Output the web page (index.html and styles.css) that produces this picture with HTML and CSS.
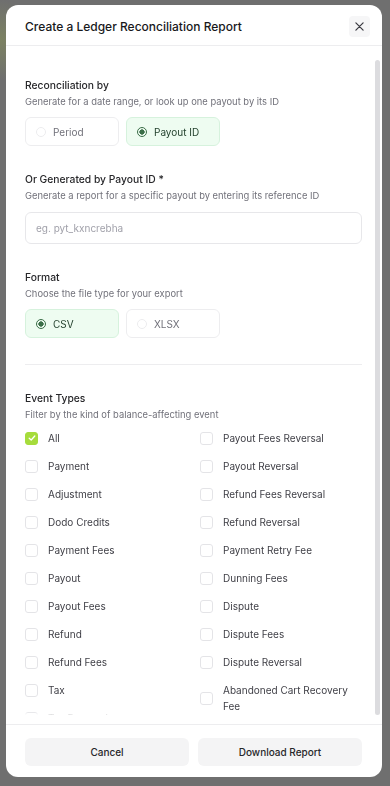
FILE: index.html
```html
<!DOCTYPE html>
<html lang="en">
<head>
    <meta charset="UTF-8">
    <meta name="viewport" content="width=device-width, initial-scale=1.0">
    <title>Ledger Reconciliation Report</title>
    <link rel="stylesheet" href="styles.css">
</head>
<body>
    <div class="backdrop">
        <div class="modal">
            <div class="modal-header">
                <h1>Create a Ledger Reconciliation Report</h1>
                <button class="close-btn" aria-label="Close">
                    <svg width="9" height="9" viewBox="0 0 10 10"><path d="M1 1L9 9M9 1L1 9" stroke="#3f3f46" stroke-width="1.4" stroke-linecap="round"/></svg>
                </button>
            </div>

            <div class="modal-body">
                <div class="section">
                    <div class="label">Reconciliation by</div>
                    <div class="hint">Generate for a date range, or look up one payout by its ID</div>
                    <div class="options">
                        <div class="option"><span class="radio"></span>Period</div>
                        <div class="option selected"><span class="radio"></span>Payout ID</div>
                    </div>
                </div>

                <div class="section">
                    <div class="label">Or Generated by Payout ID *</div>
                    <div class="hint">Generate a report for a specific payout by entering its reference ID</div>
                    <input class="text-input" type="text" placeholder="eg. pyt_kxncrebha">
                </div>

                <div class="section">
                    <div class="label">Format</div>
                    <div class="hint">Choose the file type for your export</div>
                    <div class="options">
                        <div class="option selected"><span class="radio"></span>CSV</div>
                        <div class="option"><span class="radio"></span>XLSX</div>
                    </div>
                </div>

                <div class="divider"></div>

                <div class="section">
                    <div class="label">Event Types</div>
                    <div class="hint">Filter by the kind of balance-affecting event</div>
                    <div class="events">
                        <div class="event-col">
                            <label class="check"><span class="box checked"><svg width="8" height="8" viewBox="0 0 10 10"><path d="M1.5 5.2L4 7.5L8.5 2.5" fill="none" stroke="#fff" stroke-width="1.6" stroke-linecap="round" stroke-linejoin="round"/></svg></span>All</label>
                            <label class="check"><span class="box"></span>Payment</label>
                            <label class="check"><span class="box"></span>Adjustment</label>
                            <label class="check"><span class="box"></span>Dodo Credits</label>
                            <label class="check"><span class="box"></span>Payment Fees</label>
                            <label class="check"><span class="box"></span>Payout</label>
                            <label class="check"><span class="box"></span>Payout Fees</label>
                            <label class="check"><span class="box"></span>Refund</label>
                            <label class="check"><span class="box"></span>Refund Fees</label>
                            <label class="check"><span class="box"></span>Tax</label>
                            <label class="check"><span class="box"></span>Tax Reversal</label>
                        </div>
                        <div class="event-col">
                            <label class="check"><span class="box"></span>Payout Fees Reversal</label>
                            <label class="check"><span class="box"></span>Payout Reversal</label>
                            <label class="check"><span class="box"></span>Refund Fees Reversal</label>
                            <label class="check"><span class="box"></span>Refund Reversal</label>
                            <label class="check"><span class="box"></span>Payment Retry Fee</label>
                            <label class="check"><span class="box"></span>Dunning Fees</label>
                            <label class="check"><span class="box"></span>Dispute</label>
                            <label class="check"><span class="box"></span>Dispute Fees</label>
                            <label class="check"><span class="box"></span>Dispute Reversal</label>
                            <label class="check"><span class="box"></span>Abandoned Cart Recovery Fee</label>
                        </div>
                    </div>
                </div>
            </div>

            <!-- scroll indicator for the body -->
            <div class="scroll-thumb"></div>

            <div class="modal-footer">
                <button class="btn">Cancel</button>
                <button class="btn">Download Report</button>
            </div>
        </div>
    </div>
</body>
</html>
```

FILE: styles.css
```css
* {
    box-sizing: border-box;
}
body {
    margin: 0;
    font-family: Inter, "Noto Sans", sans-serif;
    background: #6f6f6f;
}
.backdrop {
    height: 786px;
    padding: 5px 8px 9px 6px;
    background: radial-gradient(circle at 0 40px, #7c8262 0, #6f6f6f 40px);
}
.modal {
    position: relative;
    height: 100%;
    background: #fff;
    border-radius: 12px;
    display: flex;
    flex-direction: column;
    overflow: hidden;
}
.modal-header {
    height: 41px;
    flex-shrink: 0;
    display: flex;
    align-items: center;
    justify-content: space-between;
    padding: 2px 12px 0 19px;
    border-bottom: 1px solid #ededef;
}
.modal-header h1 {
    margin: 0;
    font-size: 12px;
    font-weight: 500;
    color: #18181b;
}
.close-btn {
    width: 21px;
    height: 21px;
    border: none;
    border-radius: 4px;
    background: #f6f6f7;
    display: flex;
    align-items: center;
    justify-content: center;
    padding: 0;
}
.modal-body {
    flex: 1;
    overflow-y: auto;
    scrollbar-width: none;
    padding: 32px 20px 20px 19px;
    /* soft cut at the bottom edge, above the footer */
    -webkit-mask-image: linear-gradient(to bottom, #000 calc(100% - 12px), transparent calc(100% - 9px));
    mask-image: linear-gradient(to bottom, #000 calc(100% - 12px), transparent calc(100% - 9px));
}
.modal-body::-webkit-scrollbar {
    display: none;
}
.scroll-thumb {
    position: absolute;
    right: 2px;
    top: 55px;
    bottom: 62px;
    width: 5px;
    border-radius: 3px;
    background: #dcdcdf;
}
.section {
    margin-bottom: 26px;
}
.label {
    font-size: 10.3px;
    line-height: 14px;
    font-weight: 500;
    color: #27272a;
}
.hint {
    margin-top: 4px;
    font-size: 9.4px;
    line-height: 12px;
    color: #71717a;
}
.options {
    display: flex;
    gap: 7px;
    margin-top: 9px;
}
.option {
    width: 94px;
    height: 29px;
    border: 1px solid #ededef;
    border-radius: 6px;
    display: flex;
    align-items: center;
    gap: 7px;
    padding-left: 10px;
    font-size: 10px;
    color: #71717a;
}
.option.selected {
    background: #eefcf1;
    border-color: #d6f2dd;
    color: #1f3d29;
}
.radio {
    width: 10px;
    height: 10px;
    border-radius: 50%;
    border: 1px solid #ececee;
    flex-shrink: 0;
}
.option.selected .radio {
    border: 1.2px solid #3b6e48;
    background: radial-gradient(circle, #3b6e48 0 2.4px, transparent 2.9px);
}
.text-input {
    display: block;
    width: 100%;
    height: 32px;
    margin-top: 10px;
    border: 1px solid #e7e7ea;
    border-radius: 6px;
    padding: 0 10px;
    font-family: inherit;
    font-size: 10px;
    outline: none;
}
.text-input::placeholder {
    color: #a1a1aa;
}
.divider {
    height: 1px;
    background: #ededef;
    margin: 0 0 26px;
}
.events {
    display: grid;
    grid-template-columns: 1fr 1fr;
    column-gap: 13px;
    margin-top: 9px;
}
.event-col {
    display: flex;
    flex-direction: column;
    gap: 12px;
}
.check {
    display: flex;
    align-items: center;
    gap: 10px;
    font-size: 10px;
    line-height: 16px;
    color: #3f3f46;
}
.box {
    width: 13px;
    height: 13px;
    border: 1px solid #e4e4e7;
    border-radius: 3px;
    flex-shrink: 0;
    display: flex;
    align-items: center;
    justify-content: center;
}
.box.checked {
    background: #a6dc3c;
    border-color: #a6dc3c;
}
.modal-footer {
    flex-shrink: 0;
    display: flex;
    gap: 9px;
    padding: 13px 20px 11px 19px;
    border-top: 1px solid #ededef;
}
.btn {
    flex: 1;
    height: 28px;
    border: none;
    border-radius: 6px;
    background: #f4f4f5;
    font-family: inherit;
    font-size: 10px;
    font-weight: 500;
    color: #27272a;
}
```
